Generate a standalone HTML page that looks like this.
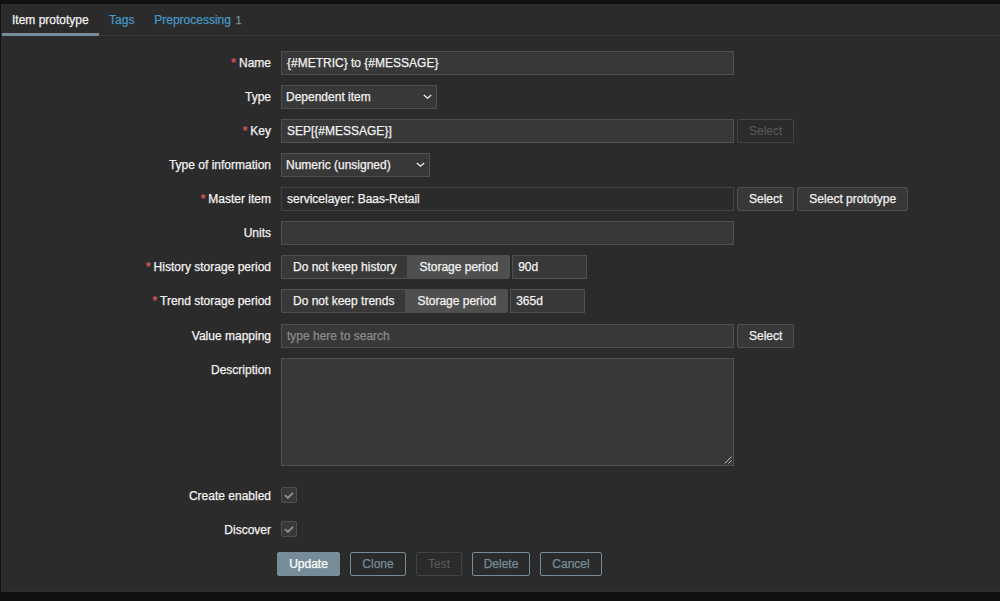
<!DOCTYPE html>
<html lang="en">
<head>
<meta charset="utf-8">
<title>Item prototype</title>
<style>
html,body{margin:0;padding:0;}
body{background:#0e1012;width:1000px;height:601px;overflow:hidden;position:relative;
  font-family:"Liberation Sans",Arial,sans-serif;font-size:12px;line-height:14px;color:#f2f2f2;-webkit-text-stroke:0.25px;}
*{box-sizing:border-box;}
.panel{position:absolute;left:1px;top:4px;width:1010px;height:588px;background:#2b2b2b;border:1px solid #303030;}
.tabs{position:absolute;left:0;top:0;width:100%;height:31px;border-bottom:1px solid #383838;margin:0;padding:0;list-style:none;white-space:nowrap;}
.tabs li{display:inline-block;height:31px;padding:8px 10px 0 10px;vertical-align:top;color:#4796c4;margin-right:-3px;}
.tabs li.active{color:#f2f2f2;border-bottom:3px solid #768d99;}
.tabs li sup{font-size:11px;color:#768d99;vertical-align:baseline;margin-left:4.5px;}
.row{position:absolute;left:0;width:100%;}
.lbl{position:absolute;left:0;width:269px;text-align:right;top:5px;white-space:nowrap;}
.lbl .req{color:#e45959;margin-right:3px;}
.fld{position:absolute;left:279px;top:0;white-space:nowrap;}
.inp{display:inline-block;vertical-align:top;height:24px;border:1px solid #4f4f4f;background:#383838;padding:4px 5px 0 5px;color:#f2f2f2;margin-right:3px;}
.inp.ro{background:#2b2b2b;border-color:#444;}
.inp.ph{color:#8a8a8a;}
.sel{position:relative;padding-left:4px;}
.sel svg{position:absolute;right:4px;top:7.5px;}
.btn{display:inline-block;vertical-align:top;height:24px;border:1px solid #768d99;background:#768d99;color:#fff;padding:4px 11px 0 11px;border-radius:2px;margin-right:10px;}
.btn.fx{padding-left:0;padding-right:0;text-align:center;}
.btn.alt{background:transparent;color:#768d99;}
.btn.grey{background:#383838;border-color:#4f4f4f;color:#f2f2f2;margin-right:3px;}
.btn.dis{background:transparent;border-color:#424242;color:#5c5c5c;-webkit-text-stroke:0;}
.radio{display:inline-block;vertical-align:top;height:24px;margin-right:2px;}
.radio span{display:inline-block;vertical-align:top;height:24px;border:1px solid #4f4f4f;background:#383838;padding:4px 11px 0 11px;}
.radio span:first-child{border-radius:2px 0 0 2px;border-right:0;}
.radio span:last-child{border-radius:0 2px 2px 0;background:#4f4f4f;}
.cb{display:inline-block;width:16px;height:16px;border:1px solid #4f4f4f;background:#383838;border-radius:2px;position:relative;}
.cb svg{position:absolute;left:2px;top:3px;}
textarea,.ta{display:block;width:453px;height:108px;border:1px solid #4f4f4f;background:#383838;position:relative;}
.ta svg{position:absolute;right:1px;bottom:1px;}
</style>
</head>
<body>
<div class="panel">
  <ul class="tabs">
    <li class="active">Item prototype</li>
    <li>Tags</li>
    <li style="margin-left:-0.5px">Preprocessing<sup>1</sup></li>
  </ul>

  <div class="row" style="top:46px"><div class="lbl"><span class="req">*</span>Name</div>
    <div class="fld"><span class="inp" style="width:453px">{#METRIC} to {#MESSAGE}</span></div></div>

  <div class="row" style="top:80px"><div class="lbl">Type</div>
    <div class="fld"><span class="inp sel" style="width:156px">Dependent item<svg width="9" height="6" viewBox="0 0 9 6"><path d="M0.8 0.9 L4.5 4.2 L8.2 0.9" fill="none" stroke="#f2f2f2" stroke-width="1.3"/></svg></span></div></div>

  <div class="row" style="top:114px"><div class="lbl"><span class="req">*</span>Key</div>
    <div class="fld"><span class="inp" style="width:453px">SEP[{#MESSAGE}]</span><span class="btn dis">Select</span></div></div>

  <div class="row" style="top:148px"><div class="lbl">Type of information</div>
    <div class="fld"><span class="inp sel" style="width:149px">Numeric (unsigned)<svg width="9" height="6" viewBox="0 0 9 6"><path d="M0.8 0.9 L4.5 4.2 L8.2 0.9" fill="none" stroke="#f2f2f2" stroke-width="1.3"/></svg></span></div></div>

  <div class="row" style="top:182px"><div class="lbl"><span class="req">*</span>Master item</div>
    <div class="fld"><span class="inp ro" style="width:453px">servicelayer: Baas-Retail</span><span class="btn grey">Select</span><span class="btn grey">Select prototype</span></div></div>

  <div class="row" style="top:216px"><div class="lbl">Units</div>
    <div class="fld"><span class="inp" style="width:453px"></span></div></div>

  <div class="row" style="top:250px"><div class="lbl"><span class="req">*</span>History storage period</div>
    <div class="fld"><span class="radio"><span>Do not keep history</span><span>Storage period</span></span><span class="inp" style="width:75px">90d</span></div></div>

  <div class="row" style="top:284px"><div class="lbl"><span class="req">*</span>Trend storage period</div>
    <div class="fld"><span class="radio"><span>Do not keep trends</span><span>Storage period</span></span><span class="inp" style="width:75px">365d</span></div></div>

  <div class="row" style="top:319px"><div class="lbl">Value mapping</div>
    <div class="fld"><span class="inp ph" style="width:453px">type here to search</span><span class="btn grey">Select</span></div></div>

  <div class="row" style="top:353px"><div class="lbl">Description</div>
    <div class="fld"><div class="ta"><svg width="10" height="10" viewBox="0 0 10 10"><path d="M2.7 9.5 L9.5 2.7 M6.5 9.5 L9.5 6.5" stroke="#c0c0c0" stroke-width="1" fill="none"/></svg></div></div></div>

  <div class="row" style="top:482px"><div class="lbl" style="top:2px">Create enabled</div>
    <div class="fld"><span class="cb"><svg width="10" height="8" viewBox="0 0 10 8"><path d="M1 4.2 L3.9 6.9 L9 1.9" fill="none" stroke="#8496a1" stroke-width="1.8"/></svg></span></div></div>

  <div class="row" style="top:516px"><div class="lbl" style="top:2px">Discover</div>
    <div class="fld"><span class="cb"><svg width="10" height="8" viewBox="0 0 10 8"><path d="M1 4.2 L3.9 6.9 L9 1.9" fill="none" stroke="#8496a1" stroke-width="1.8"/></svg></span></div></div>

  <div class="row" style="top:547px">
    <div class="fld" style="left:275px"><span class="btn fx" style="width:63px">Update</span><span class="btn alt fx" style="width:56px">Clone</span><span class="btn dis fx" style="width:46px">Test</span><span class="btn alt fx" style="width:58px">Delete</span><span class="btn alt fx" style="width:62px">Cancel</span></div></div>
</div>
</body>
</html>
